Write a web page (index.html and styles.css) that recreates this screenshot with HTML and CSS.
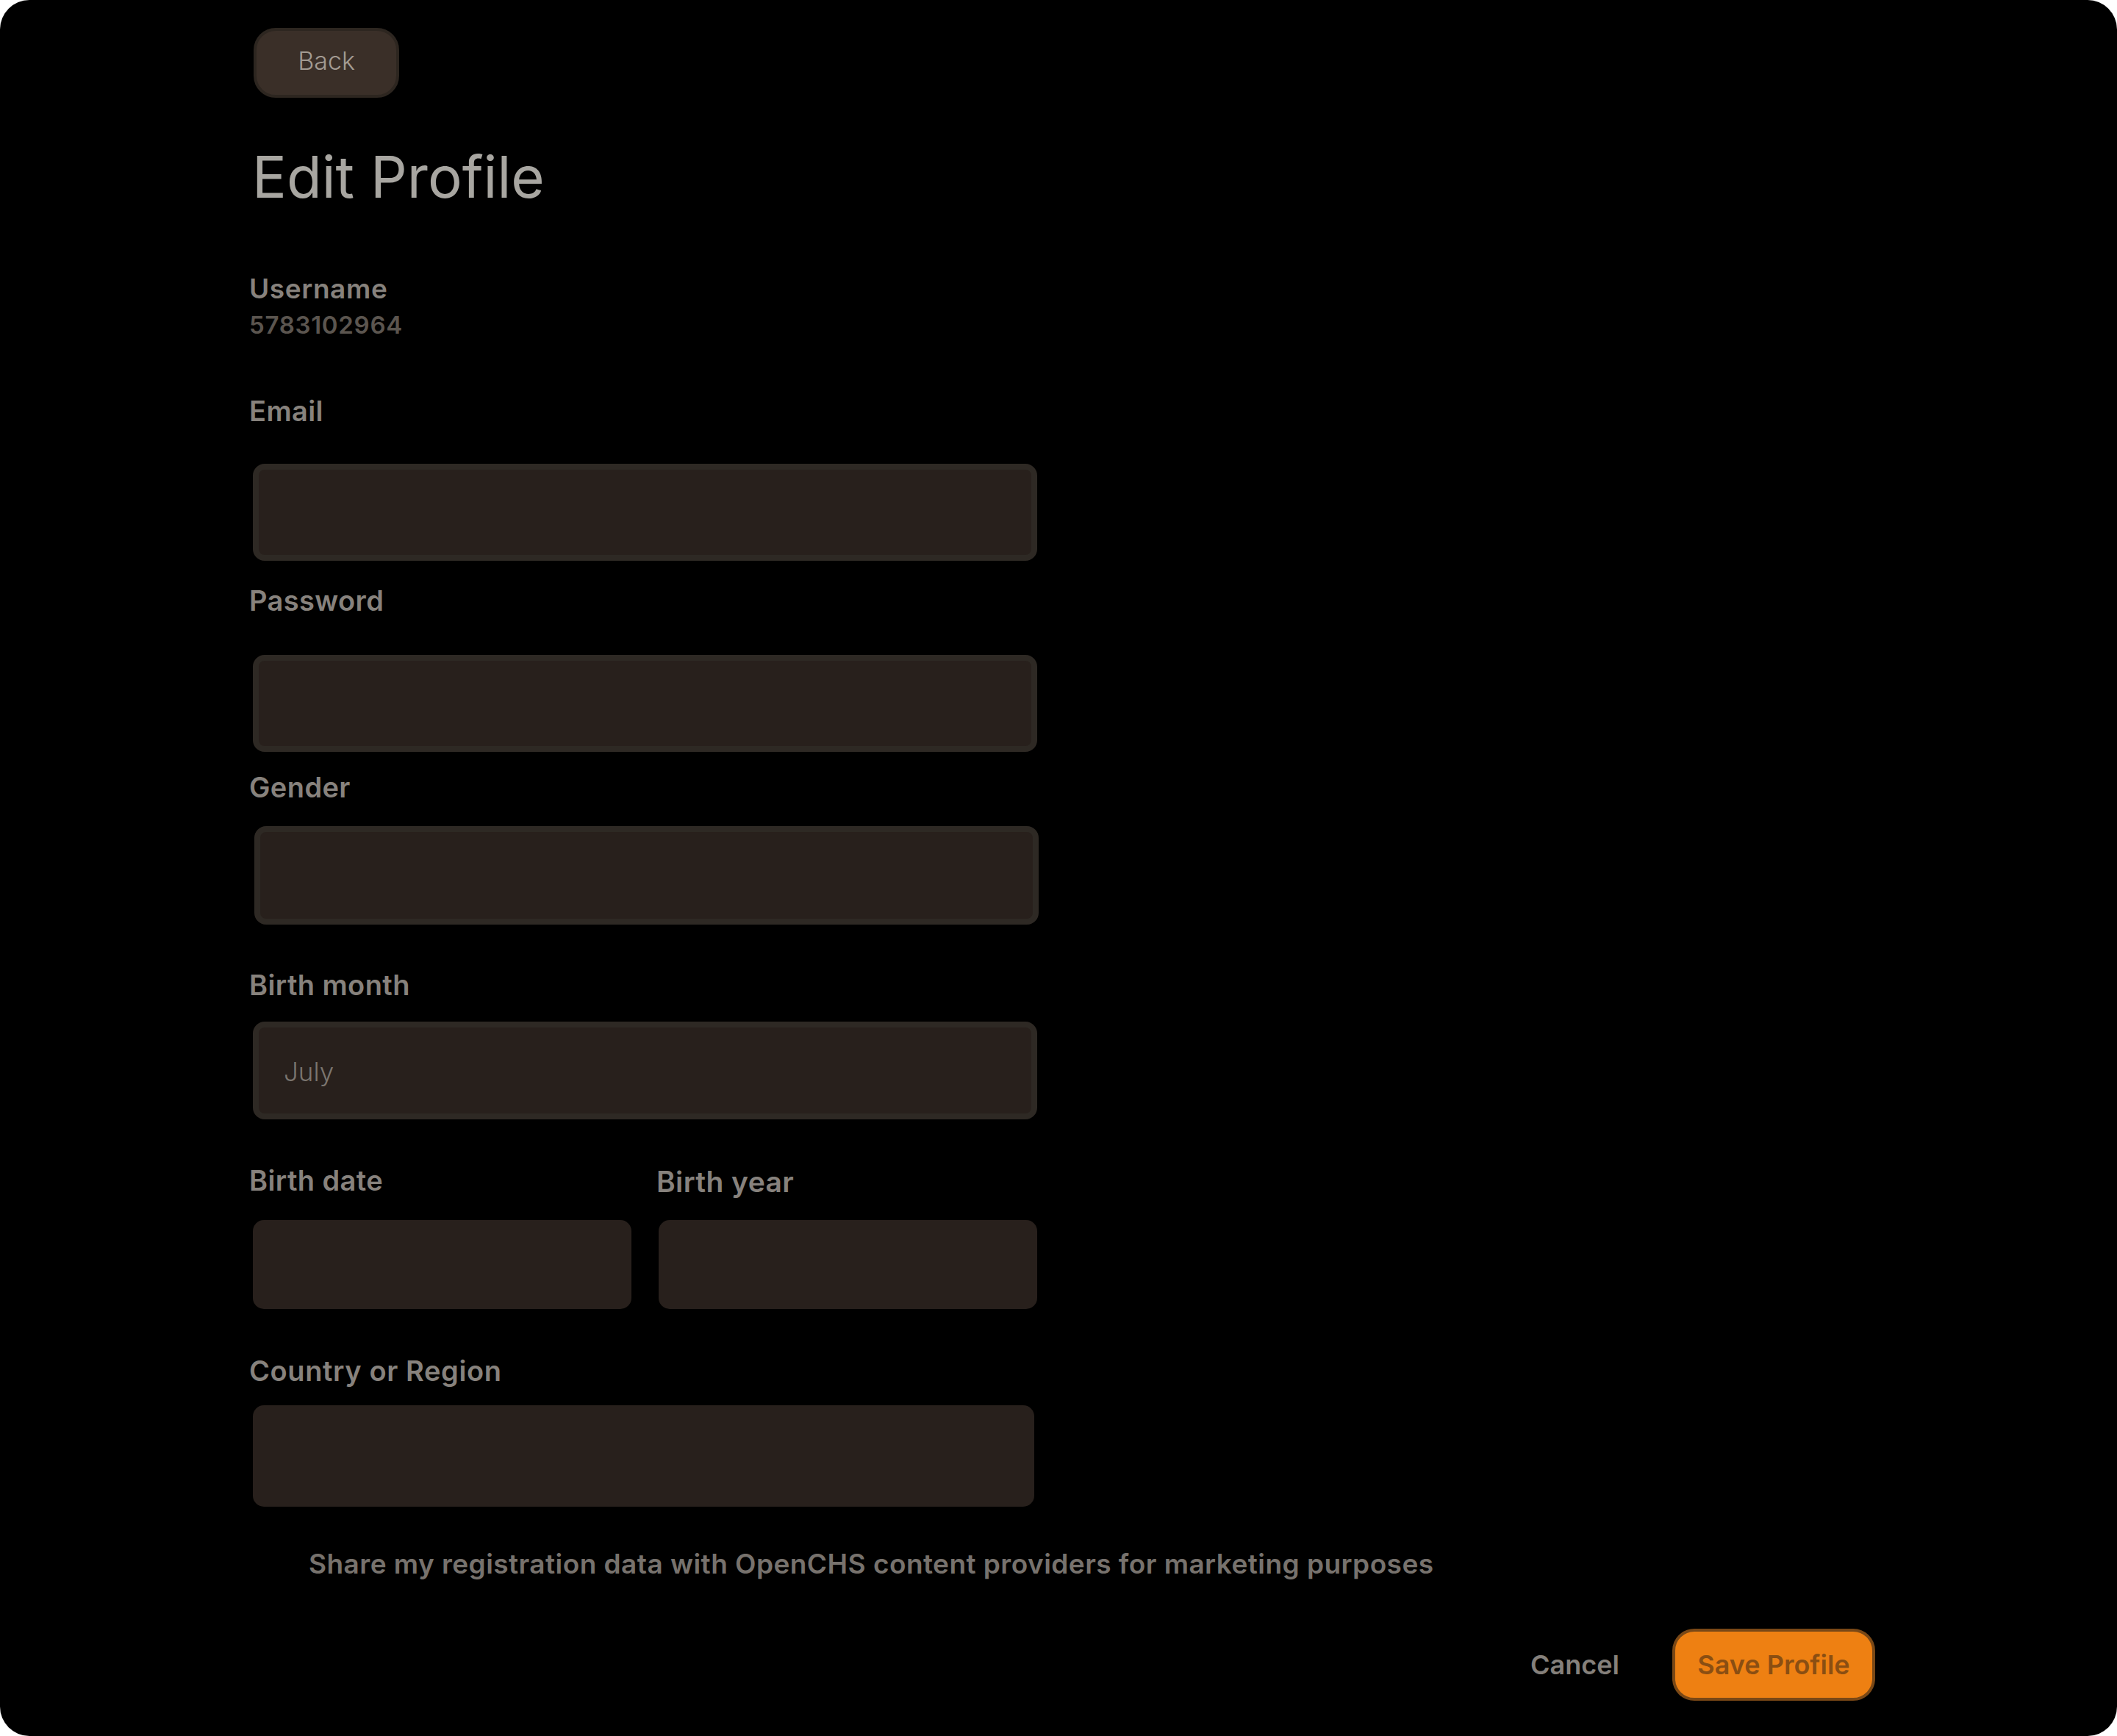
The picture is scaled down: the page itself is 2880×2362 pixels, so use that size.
FILE: index.html
```html
<!DOCTYPE html>
<html lang="en">
<head>
<meta charset="utf-8">
<title>Edit Profile</title>
<link rel="stylesheet" href="styles.css">
</head>
<body>
<div class="screen">
  <main class="content">
    <button class="back" type="button">Back</button>
    <h1 class="title">Edit Profile</h1>

    <div class="label label-username">Username</div>
    <div class="value">5783102964</div>

    <label class="label label-email">Email</label>
    <div class="input bordered input-email"></div>

    <label class="label label-password">Password</label>
    <div class="input bordered input-password"></div>

    <label class="label label-gender">Gender</label>
    <div class="input bordered input-gender"></div>

    <label class="label label-month">Birth month</label>
    <div class="input bordered input-month"><span class="input-text">July</span></div>

    <div class="pair">
      <label class="label pair-label">Birth date</label>
      <label class="label pair-label pair-label-year">Birth year</label>
      <div class="input plain pair-input"></div>
      <div class="input plain pair-input"></div>
    </div>

    <label class="label label-country">Country or Region</label>
    <div class="input plain input-country"></div>

    <p class="share">Share my registration data with OpenCHS content providers for marketing purposes</p>
  </main>

  <div class="actions">
    <button class="cancel" type="button">Cancel</button>
    <button class="save" type="button">Save Profile</button>
  </div>
</div>
</body>
</html>
```

FILE: styles.css
```css
* { box-sizing: border-box; }

html, body {
  margin: 0;
  padding: 0;
  background: #ffffff;
}

body {
  font-family: "Inter", "Noto Sans", sans-serif;
  width: 2880px;
  height: 2362px;
}

.screen {
  width: 2880px;
  height: 2362px;
  background: #000000;
  border-radius: 40px;
  overflow: hidden;
  padding-top: 38px;
}

.content {
  display: flex;
  flex-direction: column;
  align-items: flex-start;
  padding-left: 339px;
  width: 1411px;
}

.back {
  margin-left: 6px;
  width: 198px;
  height: 95px;
  border-radius: 30px;
  border: 4px solid #2d2620;
  background: #3a2f28;
  color: #a39b93;
  font-family: "Inter", sans-serif;
  font-weight: 300;
  font-size: 34px;
  padding: 0 0 6px 0;
}

.title {
  margin: 61px 0 0 4px;
  font-size: 78px;
  line-height: 94px;
  font-weight: 400;
  color: #a8a6a1;
}

.label {
  display: block;
  font-weight: 600;
  font-size: 38px;
  line-height: 44px;
  letter-spacing: 0.4px;
  color: #87827d;
}

.label-username {
  font-size: 37px;
  line-height: 41px;
  letter-spacing: 0.6px;
  margin-top: 84px;
}

.value {
  margin-top: 9px;
  font-weight: 600;
  font-size: 33px;
  line-height: 40px;
  letter-spacing: 0.7px;
  color: #5b554f;
}

.label-email { margin-top: 75px; }
.label-password { margin-top: 32px; }
.label-gender { margin-top: 26px; }
.label-month { margin-top: 60px; }
.label-country { margin-top: 62px; letter-spacing: 0.6px; }

.input {
  margin-left: 5px;
  width: 1067px;
  background: #28201c;
  border-radius: 16px;
}

.bordered {
  border: 8px solid #2e2924;
}

.input-email { margin-top: 50px; height: 132px; }
.input-password { margin-top: 52px; height: 132px; }
.input-gender { margin-top: 31px; height: 134px; margin-left: 7px; }
.input-month {
  margin-top: 28px;
  height: 133px;
  display: flex;
  align-items: center;
  padding-left: 34px;
  padding-top: 2px;
}

.input-text {
  font-weight: 300;
  font-size: 35px;
  color: #7b756f;
}

.pair {
  margin-top: 61px;
  display: grid;
  grid-template-columns: 515px 515px;
  column-gap: 37px;
  row-gap: 29px;
  margin-left: 5px;
  align-items: start;
}

.pair-label {
  margin-left: -5px;
}

.pair-label-year {
  font-size: 39px;
  line-height: 47px;
  margin-left: -3px;
}

.pair-input {
  margin-left: 0;
  width: 515px;
  height: 121px;
  border-radius: 15px;
}

.input-country {
  margin-top: 25px;
  width: 1063px;
  height: 138px;
  border-radius: 15px;
}

.share {
  margin: 56px 0 0 81px;
  font-weight: 600;
  font-size: 37px;
  line-height: 44px;
  letter-spacing: 0.45px;
  color: #77726d;
  white-space: nowrap;
}

.actions {
  display: flex;
  justify-content: flex-end;
  align-items: center;
  padding-right: 329px;
  margin-top: 66px;
  gap: 72px;
}

.cancel {
  background: none;
  border: none;
  padding: 0;
  font-family: "Inter", sans-serif;
  font-weight: 600;
  font-size: 36px;
  color: #85807b;
}

.save {
  width: 276px;
  height: 98px;
  border-radius: 30px;
  border: 4px solid #7a4816;
  background: #ee8012;
  color: #8a4e12;
  font-family: "Inter", sans-serif;
  font-weight: 600;
  font-size: 36px;
  padding: 0;
}
```
